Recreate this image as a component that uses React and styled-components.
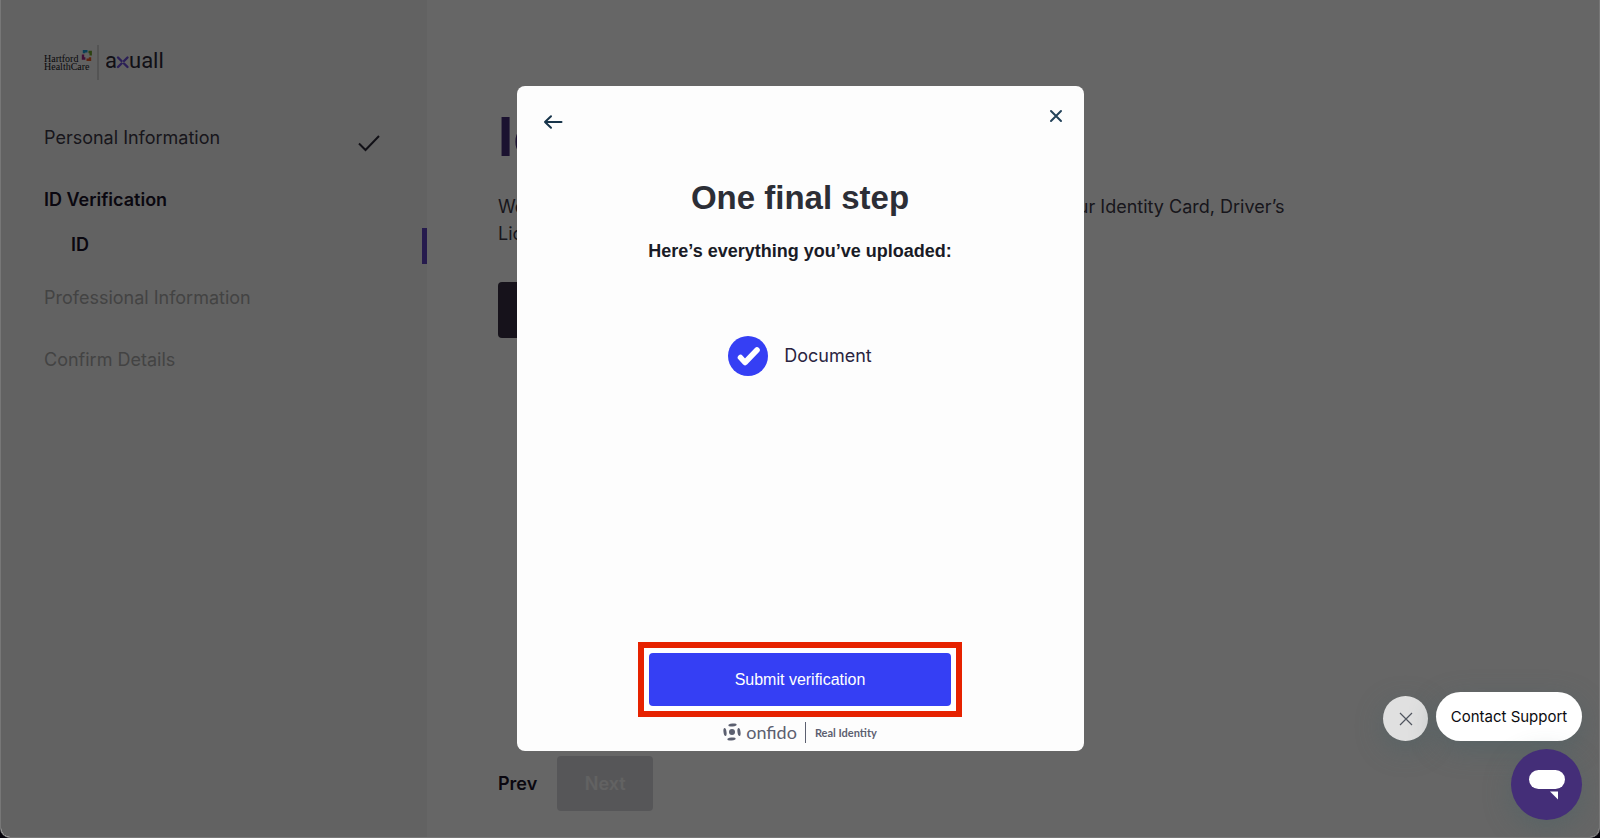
import React from "react";
import styled, { createGlobalStyle, css } from "styled-components";

const GlobalStyle = createGlobalStyle`
  *, *::before, *::after { box-sizing: border-box; }
  body {
    margin: 0;
    background: #05030a;
    color: #2b2838;
    font-family: Inter, "Liberation Sans", sans-serif;
    font-size: 18px;
  }
  h1, h2, p, ul { margin: 0; padding: 0; }
  ul { list-style: none; }
  button { border: 0; padding: 0; background: none; font-family: inherit; cursor: pointer; }
  svg { display: block; flex: none; }
`;

const Window = styled.div`
  position: relative;
  display: flex;
  min-height: 100vh;
  overflow: hidden;
  background: #fff;
  border: solid #777;
  border-width: 0 1px 1px;
  border-radius: 0 0 10px 10px;
`;

const Sidebar = styled.aside`
  width: 27%;
  max-width: 426px;
  flex: none;
  padding: 45px 0 40px 43px;
  background: #f5f5f5;
`;

const Brand = styled.div`
  display: flex;
  align-items: center;
  height: 35px;
  margin-bottom: 46px;
`;

const BrandDivider = styled.span`
  width: 2px;
  height: 35px;
  margin: 0 7px 0 3px;
  background: #d2d2d2;
`;

const StepRow = styled.a`
  display: flex;
  justify-content: space-between;
  align-items: flex-start;
  height: 24px;
  margin-bottom: ${(p) => p.$gap || 38}px;
  padding-right: 47px;
  line-height: 24px;
  text-decoration: none;
  color: ${(p) => (p.$disabled ? "#a9a9a9" : "#3c3947")};
  ${(p) =>
    p.$current &&
    css`
      font-weight: 600;
      color: #191329;
    `}
  svg { margin-top: 8px; }
`;

const SubStep = styled.a`
  display: block;
  height: 36px;
  margin-bottom: 22px;
  padding-left: 27px;
  border-right: 5px solid #5f45c0;
  line-height: 34px;
  font-weight: 600;
  color: #191329;
  text-decoration: none;
`;

const Main = styled.main`
  display: flex;
  flex-direction: column;
  align-items: flex-start;
  flex: 1;
  min-width: 0;
  padding: 104px 70px 26px 71px;
`;

const PageTitle = styled.h1`
  font-size: 54px;
  line-height: 66px;
  font-weight: 700;
  color: #452f78;
`;

const Intro = styled.p`
  max-width: 820px;
  margin: 23px 0 35px;
  line-height: 27px;
  color: #3c3947;
`;

const StartButton = styled.button`
  width: 180px;
  height: 56px;
  border-radius: 4px;
  background: #372f44;
  color: #fff;
  font-size: 18px;
  font-weight: 600;
`;

const Pager = styled.div`
  display: flex;
  align-items: center;
  gap: 20px;
  margin-top: auto;
`;

const PagerButton = styled.button`
  height: 55px;
  font-size: 18px;
  font-weight: 600;
  color: #191329;
  ${(p) =>
    p.$filled &&
    css`
      width: 96px;
      border-radius: 4px;
      background: #d8d8db;
      color: #f4f4f6;
    `}
`;

const Overlay = styled.div`
  position: absolute;
  inset: 0;
  display: flex;
  align-items: center;
  justify-content: center;
  background: rgba(0, 0, 0, 0.6);
`;

const Modal = styled.section`
  display: flex;
  flex-direction: column;
  align-items: center;
  width: 90%;
  max-width: 567px;
  min-height: 665px;
  padding: 0 0 8px;
  border-radius: 8px;
  background: #fdfdfd;
`;

const ModalBar = styled.header`
  display: flex;
  justify-content: space-between;
  align-self: stretch;
  height: 91px;
  padding: 23px 18px 0 26px;
`;

const IconButton = styled.button`
  width: 20px;
  height: ${(p) => p.$height}px;
  display: flex;
  align-items: center;
  justify-content: center;
`;

const ModalTitle = styled.h2`
  font: 700 33px/42px "Liberation Sans", Arial, sans-serif;
  color: #2c2e36;
`;

const ModalText = styled.p`
  margin-top: 19px;
  font: 700 18px/26px "Liberation Sans", Arial, sans-serif;
  color: #191b26;
`;

const Uploads = styled.ul`
  margin-top: 72px;
`;

const Upload = styled.li`
  display: flex;
  align-items: center;
  gap: 16px;
  line-height: 40px;
  color: #2a2440;
`;

const ActionFrame = styled.div`
  width: 324px;
  margin-top: auto;
  padding: 5px;
  border: 6px solid #e62200;
  background: #fff;
`;

const SubmitButton = styled.button`
  display: block;
  width: 100%;
  height: 53px;
  border-radius: 4px;
  background: #353ff4;
  color: #fff;
  font: 16px/20px "Liberation Sans", Arial, sans-serif;
`;

const Onfido = styled.footer`
  display: flex;
  align-items: center;
  height: 22px;
  margin-top: 4px;
  color: #5c6070;
`;

const OnfidoName = styled.span`
  margin-left: 5px;
  font: 18px/20px Lato, sans-serif;
`;

const OnfidoTagline = styled.span`
  margin-left: 8px;
  padding-left: 9px;
  border-left: 1px solid #5c6070;
  font: 700 11px/21px Lato, sans-serif;
`;

const Support = styled.div`
  position: absolute;
  right: 17px;
  bottom: 17px;
  display: flex;
  flex-direction: column;
  align-items: flex-end;
  gap: 8px;
`;

const SupportPrompt = styled.div`
  display: flex;
  align-items: flex-end;
  gap: 8px;
`;

const floating = css`
  display: flex;
  align-items: center;
  justify-content: center;
  box-shadow: 0 8px 28px rgba(70, 98, 102, 0.45);
`;

const DismissButton = styled.button`
  ${floating}
  width: 45px;
  height: 45px;
  border-radius: 50%;
  background: #e0e0e0;
`;

const SupportButton = styled.button`
  ${floating}
  width: 146px;
  height: 49px;
  border-radius: 25px;
  background: #fff;
  color: #0b0b0f;
  font-size: 15px;
`;

const ChatButton = styled.button`
  ${floating}
  width: 71px;
  height: 71px;
  border-radius: 50%;
  background: #442e78;
`;

const HartfordLogo = () => (
  <svg width="50" height="35" viewBox="0 0 50 35" role="img" aria-label="Hartford HealthCare">
    <g fill="#17171d" fontFamily="'Liberation Serif', serif" fontSize="10">
      <text x="0" y="17">Hartford</text>
      <text x="0" y="25">HealthCare</text>
    </g>
    <g fill="none" strokeWidth="2.4">
      <path d="M40 8.200V6.200h3.500" stroke="#1b9fd8" />
      <path d="M44.500 7h2.200v3.500" stroke="#6fa52c" />
      <path d="M39 9.500v4h2.400" stroke="#a0288c" />
      <path d="M42.500 14.800h3.500V12.200" stroke="#ea5b28" />
    </g>
  </svg>
);

const AxuallLogo = () => (
  <svg width="62" height="35" viewBox="0 0 62 35" role="img" aria-label="axuall">
    <g fill="#2b2838" fontFamily="Roboto, sans-serif" fontSize="22">
      <text x="-1" y="23">a</text>
      <text x="23" y="23">uall</text>
    </g>
    <g stroke="#6b4fd8" strokeWidth="2.4" strokeLinecap="round">
      <path d="M12 12.500l3.500 3.500M18 18.500l3.500 3.500M21.500 12.500L18 16M15.500 18.500L12 22" />
    </g>
  </svg>
);

const OnfidoMark = () => (
  <svg width="18" height="18" viewBox="0 0 18 18" fill="#5c6070" aria-hidden="true">
    <circle cx="9" cy="9" r="3" />
    <ellipse cx="9.500" cy="2" rx="4.200" ry="1.400" transform="rotate(-8 9.500 2)" />
    <ellipse cx="8.500" cy="16" rx="4.200" ry="1.400" transform="rotate(-8 8.500 16)" />
    <ellipse cx="2" cy="9" rx="1.500" ry="4" transform="rotate(-8 2 9)" />
    <ellipse cx="16" cy="9" rx="1.500" ry="4" transform="rotate(-8 16 9)" />
  </svg>
);

export default function App() {
  return (
    <>
      <GlobalStyle />
      <Window>
        <Sidebar>
          <Brand>
            <HartfordLogo />
            <BrandDivider />
            <AxuallLogo />
          </Brand>
          <nav>
            <StepRow href="#personal">
              Personal Information
              <svg width="22" height="18" viewBox="0 0 22 18" fill="none" stroke="#2b2838" strokeWidth="2">
                <path d="M1 9.500l6.500 6.500L21 2" />
              </svg>
            </StepRow>
            <StepRow href="#verification" $current $gap={16}>ID Verification</StepRow>
            <SubStep href="#id">ID</SubStep>
            <StepRow href="#professional" $disabled>Professional Information</StepRow>
            <StepRow href="#confirm" $disabled>Confirm Details</StepRow>
          </nav>
        </Sidebar>

        <Main>
          <PageTitle>Identity</PageTitle>
          <Intro>
            We need to verify your identity. To start, please provide a scan of your Identity Card, Driver’s
            License, or Passport.
          </Intro>
          <StartButton type="button">Begin</StartButton>
          <Pager>
            <PagerButton type="button">Prev</PagerButton>
            <PagerButton type="button" $filled>Next</PagerButton>
          </Pager>
        </Main>

        <Overlay>
          <Modal role="dialog" aria-labelledby="modal-title">
            <ModalBar>
              <IconButton type="button" aria-label="Back" $height={26}>
                <svg width="20" height="16" viewBox="0 0 20 16" fill="none" stroke="#17344a" strokeWidth="2" strokeLinecap="round" strokeLinejoin="round">
                  <path d="M18.500 8H2M8 2.200L2 8l6 5.800" />
                </svg>
              </IconButton>
              <IconButton type="button" aria-label="Close" $height={14}>
                <svg width="14" height="14" viewBox="0 0 14 14" stroke="#24435a" strokeWidth="2" strokeLinecap="round">
                  <path d="M2 2l10 10M12 2L2 12" />
                </svg>
              </IconButton>
            </ModalBar>
            <ModalTitle id="modal-title">One final step</ModalTitle>
            <ModalText>Here’s everything you’ve uploaded:</ModalText>
            <Uploads>
              <Upload>
                <svg width="40" height="40" viewBox="0 0 40 40" fill="none">
                  <circle cx="20" cy="20" r="20" fill="#353ff4" />
                  <path d="M12.500 21.500l4.500 5L29 14" stroke="#fff" strokeWidth="5.600" strokeLinecap="round" strokeLinejoin="round" />
                </svg>
                Document
              </Upload>
            </Uploads>
            <ActionFrame>
              <SubmitButton type="button">Submit verification</SubmitButton>
            </ActionFrame>
            <Onfido>
              <OnfidoMark />
              <OnfidoName>onfido</OnfidoName>
              <OnfidoTagline>Real Identity</OnfidoTagline>
            </Onfido>
          </Modal>
        </Overlay>

        <Support>
          <SupportPrompt>
            <DismissButton type="button" aria-label="Dismiss">
              <svg width="14" height="14" viewBox="0 0 14 14" stroke="#50555f" strokeWidth="1.200">
                <path d="M1 1l12 12M13 1L1 13" />
              </svg>
            </DismissButton>
            <SupportButton type="button">Contact Support</SupportButton>
          </SupportPrompt>
          <ChatButton type="button" aria-label="Open chat">
            <svg width="36" height="30" viewBox="0 0 36 30" fill="#fff">
              <rect width="36" height="19" rx="9.500" />
              <path d="M21 21.500h8v8z" />
            </svg>
          </ChatButton>
        </Support>
      </Window>
    </>
  );
}
